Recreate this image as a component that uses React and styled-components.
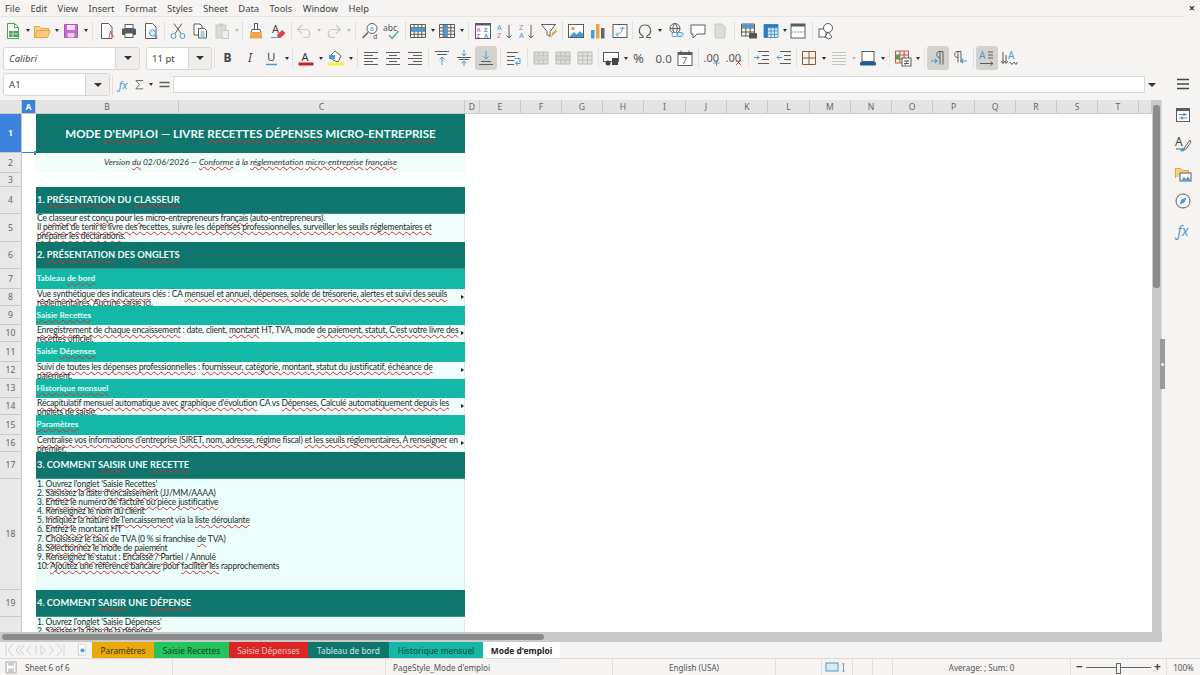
import React from 'react';
import styled, { createGlobalStyle } from 'styled-components';

const Global = createGlobalStyle`
  html, body { margin: 0; padding: 0; background: #f5f4f2; overflow: hidden; }
  * { box-sizing: border-box; }
`;

const Window = styled.div`
  width: 1200px;
  height: 675px;
  display: flex;
  flex-direction: column;
  background: #f5f4f2;
  font-family: "Noto Sans", sans-serif;
  color: #3c3c3c;
  overflow: hidden;
`;

const MenuBar = styled.div`
  height: 17px;
  display: flex;
  align-items: center;
  padding: 0 5px;
  gap: 10.4px;
  font-size: 9.4px;
  color: #444;
  border-bottom: 1px solid #e6e5e3;
  margin-right: 15px;
  position: relative;
`;

const CloseButton = styled.span`
  position: absolute;
  right: -10px;
  top: 1px;
  font-size: 11px;
  font-weight: 700;
  color: #333;
  line-height: 14px;
`;

const Toolbar = styled.div`
  height: ${p => p.$h || 28}px;
  display: flex;
  align-items: center;
  padding-left: ${p => p.$pad || 2}px;
`;

const ToolButton = styled.div`
  width: ${p => p.$w || 22}px;
  height: 24px;
  flex: none;
  display: flex;
  align-items: center;
  justify-content: center;
  border-radius: 3px;
  background: ${p => (p.$active ? '#d4d2cf' : 'transparent')};
`;

const Drop = styled.div`
  width: ${p => p.$w}px;
  flex: none;
  display: flex;
  justify-content: center;
  &::after {
    content: '';
    border-left: 2.5px solid transparent;
    border-right: 2.5px solid transparent;
    border-top: 3px solid ${p => (p.$off ? '#bbb' : '#333')};
  }
`;

const Separator = styled.div`
  width: ${p => p.$w}px;
  height: 20px;
  flex: none;
  display: flex;
  justify-content: center;
  &::after {
    content: '';
    width: 1px;
    background: ${p => (p.$w > 2 ? '#e2e1de' : 'transparent')};
  }
`;

const Combo = styled.div`
  width: ${p => p.$w}px;
  height: 23px;
  margin-left: ${p => p.$ml || 0}px;
  flex: none;
  display: flex;
  background: #fff;
  border: 1px solid #d8d7d4;
  border-radius: 3px;
  font-size: 9.6px;
  font-style: ${p => (p.$italic ? 'italic' : 'normal')};
  color: #444;
`;

const ComboText = styled.div`
  flex: 1;
  display: flex;
  align-items: center;
  padding-left: 5px;
`;

const ComboArrow = styled.div`
  width: ${p => p.$w}px;
  display: flex;
  align-items: center;
  justify-content: center;
  background: #efeeec;
  border-left: 1px solid #d8d7d4;
  &::after {
    content: '';
    border-left: 4px solid transparent;
    border-right: 4px solid transparent;
    border-top: 4px solid #333;
  }
`;

const Body = styled.div`
  height: 586px;
  display: flex;
`;

const Main = styled.div`
  width: 1162px;
  display: flex;
  flex-direction: column;
`;

const FormulaBar = styled.div`
  height: 28px;
  display: flex;
  align-items: center;
  padding: 0 3px 3px;
`;

const FormulaIcons = styled.div`
  display: flex;
  align-items: center;
`;

const FormulaInput = styled.div`
  flex: 1;
  height: 17px;
  margin-left: 1px;
  background: #fff;
  border: 1px solid #d9d8d5;
`;

const ExpandArrow = styled.div`
  width: 14px;
  display: flex;
  justify-content: center;
  &::after {
    content: '';
    border-left: 4px solid transparent;
    border-right: 4px solid transparent;
    border-top: 4px solid #333;
  }
`;

const SheetArea = styled.div`
  height: 532px;
  display: flex;
`;

const Grid = styled.div`
  width: 1152px;
  overflow: hidden;
  background: #fff;
  position: relative;
`;

const HeaderRow = styled.div`
  height: 14px;
  display: flex;
  background: #e4e4e4;
  border-bottom: 1px solid #c9c9c9;
`;

const ColHeader = styled.div`
  width: ${p => p.$w}px;
  flex: none;
  display: flex;
  align-items: center;
  justify-content: center;
  font-size: 8.6px;
  color: ${p => (p.$sel ? '#fff' : '#666')};
  font-weight: ${p => (p.$sel ? 700 : 400)};
  background: ${p => (p.$sel ? '#3b82dc' : 'transparent')};
  border-right: 1px solid #c9c9c9;
`;

const Row = styled.div`
  height: ${p => p.$h}px;
  display: flex;
`;

const RowHeader = styled.div`
  width: 22px;
  flex: none;
  display: flex;
  align-items: center;
  justify-content: center;
  font-size: 8.6px;
  color: ${p => (p.$sel ? '#fff' : '#666')};
  font-weight: ${p => (p.$sel ? 700 : 400)};
  background: ${p => (p.$sel ? '#3b82dc' : '#e8e8e8')};
  border-right: 1px solid #c9c9c9;
  border-bottom: 1px solid #c9c9c9;
`;

const CellA = styled.div`
  width: 14px;
  flex: none;
  position: relative;
  border-bottom: ${p => (p.$sel ? '1.5px solid #3b82dc' : 'none')};
  &::after {
    content: ${p => (p.$sel ? "''" : 'none')};
    position: absolute;
    right: -2px;
    bottom: -2.5px;
    width: 4px;
    height: 4px;
    background: #3b82dc;
  }
`;

const Cell = styled.div`
  width: 429px;
  flex: none;
  overflow: hidden;
  position: relative;
  font-family: Lato, "Liberation Sans", sans-serif;
  white-space: pre;
`;

const TitleCell = styled(Cell)`
  background: #0f766e;
  color: #f0fdfa;
  font-weight: 700;
  font-size: 11.55px;
  display: flex;
  align-items: center;
  justify-content: center;
`;

const VersionCell = styled(Cell)`
  background: #f0fdfa;
  color: #333;
  font-style: italic;
  font-size: 8.5px;
  display: flex;
  align-items: center;
  justify-content: center;
  padding-bottom: 2px;
`;

const SectionCell = styled(Cell)`
  background: #0f766e;
  color: #f0fdfa;
  font-weight: 700;
  font-size: 9.3px;
  display: flex;
  align-items: center;
  padding: 0 0 2px 1px;
  border-bottom: 1px solid #3f918a;
`;

const TabCell = styled(Cell)`
  background: #14b8a6;
  color: #e6fbf7;
  font-weight: 700;
  font-size: 8.3px;
  display: flex;
  align-items: center;
  padding: 0 0 2px 0.5px;
`;

const TextCell = styled(Cell)`
  background: ${p => (p.$tall ? '#eafffb' : '#f0fdfa')};
  color: #2a2a2a;
  font-size: 8.55px;
  letter-spacing: -0.2px;
  line-height: 9.1px;
  padding: ${p => p.$top}px 0 0 1px;
  border-right: 1px solid #e0ecea;
`;

const MoreMark = styled.span`
  position: absolute;
  right: 0;
  top: 6px;
  border-top: 2.5px solid transparent;
  border-bottom: 2.5px solid transparent;
  border-left: 3px solid #222;
`;

const Spell = styled.span`
  text-decoration: underline wavy #d62c2c 1px;
  text-underline-offset: 0.5px;
  text-decoration-skip-ink: none;
`;

const VScroll = styled.div`
  width: 10px;
  padding: 5px 1px 0 0;
  background: #c9c9c9;
  border-right: 1px solid #dcdbd9;
`;

const VThumb = styled.div`
  height: 183px;
  margin-left: 1px;
  width: 7px;
  border-radius: 3px;
  background: #8b8b8b;
`;

const HScroll = styled.div`
  height: 10px;
  padding: 2px 0 0 2px;
  background: #c9c9c9;
`;

const HThumb = styled.div`
  width: 542px;
  height: 6px;
  border-radius: 3px;
  background: #8b8b8b;
`;

const TabBar = styled.div`
  height: 16px;
  display: flex;
  align-items: flex-start;
`;

const NavArrows = styled.div`
  width: 72px;
  height: 16px;
  padding-left: 5px;
  display: flex;
  align-items: center;
  flex: none;
`;

const AddSheet = styled.div`
  width: 20px;
  height: 16px;
  flex: none;
  display: flex;
  align-items: center;
  justify-content: center;
`;

const SheetTab = styled.div`
  width: ${p => p.$w}px;
  height: 16px;
  flex: none;
  display: flex;
  align-items: center;
  justify-content: center;
  font-size: ${p => (p.$current ? 8.4 : 8.3)}px;
  background: ${p => p.$bg};
  color: ${p => p.$fg};
  font-weight: ${p => (p.$current ? 700 : 400)};
`;

const Sidebar = styled.div`
  width: 38px;
  position: relative;
  display: flex;
  flex-direction: column;
  align-items: center;
  padding-left: 3px;
`;

const SideButton = styled.div`
  height: ${p => p.$h}px;
  margin-bottom: ${p => p.$mb || 0}px;
  display: flex;
  align-items: center;
  justify-content: center;
`;

const Splitter = styled.div`
  position: absolute;
  left: -2px;
  top: 267px;
  width: 5px;
  height: 50px;
  background: #9b9b9b;
  display: flex;
  align-items: center;
  justify-content: center;
  &::after {
    content: '';
    width: 3px;
    height: 3px;
    border-radius: 50%;
    background: #f5f4f2;
  }
`;

const StatusBar = styled.div`
  height: 17px;
  display: flex;
  align-items: center;
  border-top: 1px solid #dcdbd9;
  font-size: 8.1px;
  color: #555;
`;

const StatusCell = styled.div`
  width: ${p => p.$w}px;
  height: 100%;
  flex: none;
  display: flex;
  align-items: center;
  justify-content: ${p => p.$justify || 'flex-start'};
  padding-left: ${p => p.$pad || 0}px;
  border-right: ${p => (p.$plain ? 'none' : '1px solid #e0dfdc')};
  gap: ${p => p.$gap || 0}px;
`;

const SliderLine = styled.div`
  width: 65px;
  height: 1px;
  background: #666;
  position: relative;
  margin: 0 3px;
  &::after {
    content: '';
    position: absolute;
    left: 30px;
    top: -4px;
    width: 3px;
    height: 9px;
    background: #f5f4f2;
    border: 1px solid #666;
  }
`;

const ZoomSign = styled.span`
  font-size: 12px;
  font-weight: 700;
  color: #444;
  line-height: 12px;
`;

const BLUE = '#4a9ad6';
const DARK = '#5c5c5c';
const GREY = '#c8c8c6';
const ORANGE = '#eba13c';
const RED = '#d9453f';
const PURPLE = '#c06fc6';
const GREEN = '#46a35c';

const Lines = ({ rows, color = DARK }) => (
  <path d={rows.map(([y, a, b]) => `M${a} ${y}H${b}`).join('')} stroke={color} fill="none" />
);

const Cells = ({ x, y, w, h, nx, ny, color = DARK, fill = 'none' }) => {
  let d = `M${x} ${y}h${w}v${h}h${-w}z`;
  for (let i = 1; i < nx; i++) d += `M${x + (w * i) / nx} ${y}v${h}`;
  for (let i = 1; i < ny; i++) d += `M${x} ${y + (h * i) / ny}h${w}`;
  return <path d={d} stroke={color} fill={fill} />;
};

const Label = ({ x, y, size = 8, color = DARK, weight = 400, style, children }) => (
  <text x={x} y={y} fontSize={size} fill={color} fontWeight={weight} fontStyle={style} fontFamily="Noto Sans, sans-serif">{children}</text>
);

const ArrowDown = ({ x, y1, y2, color = BLUE }) => (
  <path d={`M${x} ${y1}V${y2}M${x - 2.5} ${y2 - 2.5}L${x} ${y2}L${x + 2.5} ${y2 - 2.5}`} stroke={color} fill="none" />
);

const ArrowUp = ({ x, y1, y2, color = BLUE }) => (
  <path d={`M${x} ${y1}V${y2}M${x - 2.5} ${y2 + 2.5}L${x} ${y2}L${x + 2.5} ${y2 + 2.5}`} stroke={color} fill="none" />
);

const icons = {
  new: <><path d="M3.5 1.5h7l4 4v11h-11z" fill="#fff" stroke={GREEN} /><path d="M10.5 1.5v4h4" fill="none" stroke={GREEN} /><rect x="5" y="9" width="9" height="6" fill={GREEN} /><path d="M5 12h9M9 9v6" stroke="#bfe3c6" /></>,
  open: <><path d="M1.5 15V4.5h5l2 2h7V9" fill="#f6d08f" stroke={ORANGE} /><path d="M1.5 15.5l2.5-7h13l-2.5 7z" fill="#f9c97c" stroke={ORANGE} /></>,
  save: <><path d="M2.5 2.5h13v13h-13z" fill={PURPLE} stroke="#a85bb0" /><rect x="5" y="3" width="8" height="5" fill="#f3dff5" /><rect x="5.5" y="11" width="7" height="4.5" fill="#e9cdec" /></>,
  pdf: <><path d="M3.5 1.5h7l3.5 3.5v11.5h-10.5z" fill="#fff" stroke={DARK} /><path d="M10.5 17c1-3 1.5-6 2-8 .5 3 2 5 4 6" fill="none" stroke={RED} /></>,
  print: <><rect x="5" y="2.5" width="8" height="4" fill="#fff" stroke={DARK} /><rect x="2" y="6.5" width="14" height="6.5" rx="1" fill="#4d5a66" /><rect x="5" y="11" width="8" height="4.5" fill="#fff" stroke={DARK} /></>,
  preview: <><path d="M3.5 1.5h7l3.5 3.5v11.5h-10.5z" fill="#fff" stroke={DARK} /><circle cx="10.5" cy="11" r="3" fill="#e3f1fa" stroke={BLUE} /><path d="M12.5 13.5l3 3" stroke={BLUE} strokeWidth="1.5" /></>,
  cut: <><path d="M5 1.5l7 10M13 1.5l-7 10" stroke={DARK} fill="none" /><circle cx="4.5" cy="14" r="2.5" fill="none" stroke={BLUE} /><circle cx="13.5" cy="14" r="2.5" fill="none" stroke={BLUE} /></>,
  copy: <><path d="M3 2h6l2 2v9H3z" fill="#fff" stroke={DARK} /><path d="M7.5 6.5h6l2 2v7.5h-8z" fill="#fff" stroke={DARK} /><path d="M9.5 10h4M9.5 12h4M9.5 14h4" stroke={BLUE} /></>,
  paste: <><rect x="3" y="3" width="10" height="13" fill="#dcdcda" stroke={GREY} /><rect x="6" y="1.5" width="4" height="3" fill={GREY} /><rect x="9" y="8.5" width="6.5" height="8" fill="#eee" stroke={GREY} /></>,
  clone: <><rect x="7.5" y="1.5" width="3" height="6" fill="#fff" stroke={DARK} /><path d="M5 7.5h8l1 3H4z" fill="#fff" stroke={DARK} /><path d="M4 10.5h10l1 5.5H3z" fill="#f2a650" stroke={ORANGE} /></>,
  clear: <><Label x={3} y={11} size={11} color="#444">A</Label><path d="M8 13l5-5 3.5 3-5 5h-2z" fill={RED} /><path d="M2 15.5h7" stroke={BLUE} /></>,
  undo: <path d="M7 3L2.5 7.5 7 11.5M3 7.5h8c5 0 5 8 0 8H8" fill="none" stroke={GREY} strokeWidth="1.2" />,
  redo: <path d="M11 3l4.5 4.5L11 11.5M15 7.5H7c-5 0-5 8 0 8h3" fill="none" stroke={GREY} strokeWidth="1.2" />,
  find: <><circle cx="11" cy="6.5" r="5" fill="#fff" stroke={DARK} /><path d="M7 10.5l-5.5 5.5" stroke={DARK} strokeWidth="1.5" /><Label x={8.5} y={9} size={7.5} color={BLUE}>a</Label><Label x={12} y={16.5} size={7}>d</Label></>,
  spell: <><Label x={0} y={8.5} size={8.5} color="#555">abc</Label><path d="M6 13l3 3.5L15.5 9" fill="none" stroke="#4db07a" strokeWidth="1.3" /></>,
  tableRow: <><Cells x={1.5} y={2.5} w={15} h={13} nx={4} ny={4} /><rect x="2" y="6" width="14" height="3.5" fill={BLUE} /></>,
  tableCol: <><Cells x={1.5} y={2.5} w={15} h={13} nx={4} ny={4} /><rect x="6" y="3" width="3.5" height="12" fill={BLUE} /></>,
  sort: <><rect x="1.5" y="1.5" width="15" height="15" fill="#fff" stroke={DARK} /><rect x="1.5" y="1.5" width="15" height="2" fill={DARK} /><Label x={2.5} y={9.5} size={6} color={PURPLE} weight={700}>A</Label><Label x={2.5} y={15.5} size={6} color={PURPLE} weight={700}>Z</Label><Label x={10} y={9.5} size={6} color={BLUE} weight={700}>Z</Label><Label x={10} y={15.5} size={6} color={BLUE} weight={700}>A</Label></>,
  asc: <><Label x={1} y={8} size={7.5} color={BLUE}>A</Label><Label x={1} y={16} size={7.5} color={PURPLE}>Z</Label><ArrowDown x={13} y1={3} y2={16} color={DARK} /></>,
  desc: <><Label x={1} y={8} size={7.5} color={PURPLE}>Z</Label><Label x={1} y={16} size={7.5} color={BLUE}>A</Label><ArrowDown x={13} y1={3} y2={16} color={DARK} /></>,
  filter: <><path d="M1.5 2.5h14l-5.5 7v5l-3-2v-3z" fill="#fff" stroke={DARK} /><path d="M11 16l1-5 4-3.5 1 2-4 3.5z" fill={ORANGE} /></>,
  image: <><rect x="1.5" y="2.5" width="15" height="13" fill="#fff" stroke={DARK} /><circle cx="6" cy="6.5" r="1.8" fill={ORANGE} /><path d="M2 15l5-5 3 2.5 3-3.5 3 3v3z" fill={BLUE} /></>,
  chart: <><rect x="2" y="8" width="3.5" height="8.5" fill={BLUE} /><rect x="7" y="2" width="3.5" height="14.5" fill={ORANGE} /><rect x="12" y="6" width="3.5" height="10.5" fill="#666" /></>,
  pivot: <><rect x="2" y="2.5" width="14" height="13" fill="#fafafa" stroke={DARK} /><path d="M5.5 12.5c3 0 6-3 6-7M9.5 7l2-2 2 2M7 10.5l-2 2 2 2" fill="none" stroke={BLUE} /></>,
  omega: <path d="M3 15.5h4v-1.5c-6-3-4-11 2-11s8 8 2 11v1.5h4" fill="none" stroke={DARK} strokeWidth="1.2" />,
  link: <><circle cx="8" cy="6.5" r="5" fill="none" stroke={DARK} /><path d="M3 6.5h10M8 1.5c-3 3-3 7 0 10M8 1.5c3 3 3 7 0 10" fill="none" stroke={DARK} /><rect x="5" y="10.5" width="6" height="4" rx="2" fill="#fff" stroke={BLUE} /><rect x="10" y="10.5" width="6" height="4" rx="2" fill="none" stroke={BLUE} /></>,
  comment: <path d="M2 3h14v9H8l-4 4v-4H2z" fill="#fff" stroke={DARK} />,
  headers: <path d="M4 2h7l3 3v11H4z" fill="#dcdcda" stroke={GREY} />,
  printArea: <><Cells x={1.5} y={2} w={13} h={12} nx={3} ny={3} /><rect x="2" y="2.5" width="12" height="3" fill={BLUE} /><rect x="9" y="11" width="8" height="5.5" rx="1" fill="#555" /></>,
  freeze: <><Cells x={2} y={2.5} w={14} h={13} nx={4} ny={4} color={BLUE} fill="#dcebf7" /><rect x="2" y="2.5" width="14" height="3" fill="#2e7cbc" /><rect x="2" y="2.5" width="3.5" height="13" fill="#2e7cbc" /></>,
  split: <><rect x="2" y="2" width="14" height="14" fill="#fff" stroke={DARK} /><rect x="2" y="2" width="14" height="2.5" fill={DARK} /><path d="M2 10h14" stroke={BLUE} strokeDasharray="2 1" /></>,
  shapes: <><rect x="2" y="7" width="7" height="8" fill="#fff" stroke={DARK} /><circle cx="11" cy="6" r="4.5" fill="#fff" stroke={DARK} /><path d="M8 15l3-5 4 5-3 2z" fill="#fff" stroke={DARK} /></>,
  bold: <Label x={4.5} y={13} size={12} weight={700} color="#444">B</Label>,
  italic: <Label x={7} y={13} size={12} style="italic" color="#444">I</Label>,
  underline: <><Label x={4} y={12} size={11.5} color="#444">U</Label><path d="M3 15.5h11" stroke={BLUE} strokeWidth="1.5" /></>,
  fontColor: <><Label x={4.5} y={12} size={11} color="#333">A</Label><rect x="1.5" y="13.5" width="15" height="3" fill="#c9211e" /></>,
  bgColor: <><path d="M8 2l6 5-3 6-5-2-2-5z" fill="#fff" stroke={DARK} /><rect x="2" y="6" width="6" height="4" fill={BLUE} /><rect x="1.5" y="13.5" width="15" height="3" fill="#f7f034" /></>,
  left: <Lines rows={[[3.5, 2, 16], [6.5, 2, 11], [9.5, 2, 16], [12.5, 2, 11], [15.5, 2, 16]]} />,
  center: <Lines rows={[[3.5, 2, 16], [6.5, 5, 13], [9.5, 2, 16], [12.5, 5, 13], [15.5, 2, 16]]} />,
  right: <Lines rows={[[3.5, 2, 16], [6.5, 7, 16], [9.5, 2, 16], [12.5, 7, 16], [15.5, 2, 16]]} />,
  top: <><Lines rows={[[2.5, 2, 16], [5.5, 4, 14]]} /><ArrowUp x={9} y1={16} y2={8} /></>,
  middle: <><Lines rows={[[8.5, 2, 16], [10.5, 4, 14]]} /><ArrowDown x={9} y1={1} y2={7} /><ArrowUp x={9} y1={17} y2={12} /></>,
  bottom: <><Lines rows={[[12.5, 4, 14], [15.5, 2, 16]]} /><ArrowDown x={9} y1={2} y2={10} /></>,
  wrap: <><Lines rows={[[3.5, 2, 13], [7.5, 2, 10], [11.5, 2, 9], [15.5, 2, 9]]} /><path d="M10 9.5h5v5h-4M13 12.5l-2.5 2 2.5 2" fill="none" stroke={BLUE} /></>,
  merge: <><Cells x={2} y={3} w={14} h={12} nx={3} ny={3} color="#bcbcba" fill="#dcdcda" /><rect x="2.5" y="7" width="13" height="4" fill="#d2d2d0" /></>,
  mergeCenter: <><Cells x={2} y={3} w={14} h={12} nx={3} ny={1} color="#bcbcba" fill="#dcdcda" /><rect x="2" y="7" width="14" height="4" fill="#d2d2d0" stroke="#bcbcba" /></>,
  unmerge: <Cells x={2} y={3} w={14} h={12} nx={3} ny={3} color="#bcbcba" fill="#e2e2e0" />,
  currency: <><rect x="1.5" y="3.5" width="15" height="9" fill="#fff" stroke={DARK} /><circle cx="6" cy="14" r="2.5" fill="#444" /><rect x="10" y="9" width="6" height="7" fill="#444" /></>,
  percent: <Label x={1} y={14} size={13} color="#555">%</Label>,
  number: <Label x={1.5} y={13.5} size={11.5} color="#555">0.0</Label>,
  date: <><rect x="2" y="3.5" width="14" height="13" fill="#fff" stroke={DARK} /><rect x="2" y="3.5" width="14" height="2.5" fill={DARK} /><path d="M5 1.5v3M13 1.5v3" stroke={DARK} /><Label x={6} y={14.5} size={9}>7</Label></>,
  addDec: <><Label x={0.5} y={12.5} size={11} color="#555">.00</Label><path d="M13.5 11v6M10.5 14h6" stroke={BLUE} /></>,
  delDec: <><Label x={0.5} y={12.5} size={11} color="#555">.00</Label><path d="M11 11l5 5M16 11l-5 5" stroke={RED} /></>,
  indent: <><Lines rows={[[2.5, 5, 16], [6.5, 9, 16], [10.5, 9, 16], [14.5, 5, 16]]} /><path d="M1 8.5h5M4 6.5l2 2-2 2" fill="none" stroke={BLUE} /></>,
  outdent: <><Lines rows={[[2.5, 5, 16], [6.5, 9, 16], [10.5, 9, 16], [14.5, 5, 16]]} /><path d="M7 8.5H2M4 6.5l-2 2 2 2" fill="none" stroke={BLUE} /></>,
  border: <path d="M2.5 2.5h13v13h-13zM9 2.5v13M2.5 9h13" fill="none" stroke="#8a5a2c" />,
  borderStyle: <Lines color="#c4c4c2" rows={[[3.5, 2, 16], [6.5, 2, 16], [9.5, 2, 16], [12.5, 2, 16], [15.5, 2, 16]]} />,
  borderColor: <><rect x="3" y="2.5" width="12" height="10" fill="#fff" stroke={DARK} /><rect x="1" y="13" width="16" height="3.5" rx="1" fill="#1f5f9e" /></>,
  conditional: <><Cells x={1.5} y={2} w={13} h={12} nx={3} ny={3} color="#c2574f" fill="#f5e7e3" /><rect x="2" y="6" width="4" height="4" fill={GREEN} /><rect x="8" y="9" width="9" height="8" fill="#fff" stroke={DARK} /><path d="M10 12h5M10 14.5h5M11 16l3-5" stroke={DARK} /></>,
  ltr: <><path d="M14 2.5H10c-3 0-3 6 0 6h1M11 2.5v13M14 2.5v13" fill="none" stroke={DARK} /><path d="M2 12h6M6 10l2 2-2 2" fill="none" stroke={BLUE} strokeWidth="1.2" /></>,
  rtl: <><path d="M10 2.5H6c-3 0-3 6 0 6h1M7 2.5v11M10 2.5v11" fill="none" stroke={DARK} /><path d="M16 12h-6M12 10l-2 2 2 2" fill="none" stroke={BLUE} strokeWidth="1.2" /></>,
  textH: <><Label x={1} y={10} size={10} color={BLUE}>A</Label><path d="M10 3h5M10 6h5M10 9h5" stroke={DARK} /><path d="M2 14.5h13M12.5 12.5l2.5 2-2.5 2" fill="none" stroke={DARK} /></>,
  textV: <><Label x={8} y={10} size={10} color={BLUE}>A</Label><path d="M3 3v11M6 6v8" stroke={DARK} /><path d="M1 12l2 2.5L5 12M4 12l2 2.5L8 12M10 13l2 2.5 2-2.5M14 13l2 2.5L17.5 13" fill="none" stroke={DARK} /></>,
  fx: <Label x={2} y={13} size={12} color={BLUE} style="italic">ƒx</Label>,
  sum: <path d="M14 3.5H4l5 5.5-5 6h10" fill="none" stroke={DARK} strokeWidth="1.2" />,
  equals: <path d="M3 6.5h12M3 11.5h12" stroke={DARK} strokeWidth="1.8" />,
  menu: <path d="M3 4.5h12M3 9h12M3 13.5h12" stroke="#444" strokeWidth="1.6" />,
  properties: <><rect x="2.5" y="2.5" width="13" height="13" fill="#fff" stroke={DARK} /><rect x="2.5" y="2.5" width="13" height="2.5" fill={DARK} /><path d="M5 8.5h8M5 12h8" stroke={BLUE} /><path d="M10 7v3M8 10.5v3" stroke={DARK} /></>,
  styles: <><Label x={1} y={11} size={12} color="#444">A</Label><path d="M2 14h8" stroke={DARK} /><path d="M16 5l-5 7-2 3 3-1 5-7z" fill="#fff" stroke={DARK} /><path d="M6 16c1-3 4-4 5-2s-3 3-5 2z" fill={BLUE} /></>,
  gallery: <><path d="M1.5 13V3.5h5l2 2h6v3" fill="#f6d08f" stroke={ORANGE} /><rect x="6" y="8" width="11" height="8" fill="#fff" stroke={DARK} /><path d="M7 15.5l3-3.5 2 2 2-2.5 2.5 4z" fill={BLUE} /></>,
  navigator: <><circle cx="9" cy="9" r="7" fill="#fff" stroke={DARK} /><path d="M12.5 5.5L10.5 10.5 5.5 12.5 7.5 7.5z" fill={BLUE} /></>,
  functions: <Label x={2} y={14} size={14} color={BLUE} style="italic">ƒx</Label>,
  save2: <><rect x="2.5" y="2.5" width="12" height="13" fill="#fff" stroke="#999" /><rect x="5" y="3" width="7" height="4" fill="#ccc" /><rect x="5" y="10" width="7" height="5.5" fill="#ccc" /></>,
  selection: <rect x="3" y="5" width="12" height="8" fill="#d8ebf7" stroke={BLUE} />,
  ibeam: <path d="M2 3h4M4 3v12M2 15h4" stroke={DARK} fill="none" />,
  addSheet: <><path d="M4 1.5h7l2 2v11H4z" fill="#fff" stroke="#ccc" /><circle cx="9" cy="9" r="2.5" fill={BLUE} /></>,
  nav: <path d="M1 2v12M8 2L3 8l5 6M15 3l-4 5 4 5M19 3l-4 5 4 5M26 3l-4 5 4 5M31 3v10M36 3v10M36 3l4 5-4 5M44 3l4 5-4 5M52 2l5 6-5 6M59 2v12" fill="none" stroke="#d2d2d0" />,
};

const Icon = ({ name, size = 18 }) => (
  <svg width={size} height={size} viewBox="0 0 18 18">{icons[name]}</svg>
);

const MENUS = ['File', 'Edit', 'View', 'Insert', 'Format', 'Styles', 'Sheet', 'Data', 'Tools', 'Window', 'Help'];

const TOOLS_TOP = [
  'new', 'd', 'open', 'd', 'save', 'd', 7, 'pdf', 'print', 'preview', 5, 'cut', 'copy', 'paste', 'o', 5, 'clone', 'clear', 4,
  'undo', 'o', 1, 'redo', 'o', 7, 'find', 'spell', 4, 'tableRow', 'd', 'tableCol', 'd', 7, 'sort', 'asc', 'desc', 'filter', 5,
  'image', 'chart', 'pivot', 3, 'omega', 'd', 2, 'link', 'comment', 'headers', 7, 'printArea', 'freeze', 'n', 'split', 6, 'shapes',
];

const TOOLS_FORMAT = [
  5, 'bold', 'italic', 'underline', 'd', 5, 'fontColor', 'd', 1, 'bgColor', 'd', 6, 'left', 'center', 'right', 5,
  'top', 'middle', '*bottom', 6, 'wrap', 5, 'merge', 'mergeCenter', 'unmerge', 4, 'currency', 'd', 1, 'percent', 'number', 'date', 5,
  'addDec', 'delDec', 6, 'indent', 'outdent', 3, 'border', 'd', 1, 'borderStyle', 'o', 'borderColor', 'd', 6, 'conditional', 'd', 6,
  '*ltr', 'rtl', 5, '*textH', 'textV',
];

const renderTools = items => items.map((item, i) => {
  if (typeof item === 'number') return <Separator key={i} $w={item} />;
  if (item === 'd') return <Drop key={i} $w={7} />;
  if (item === 'n') return <Drop key={i} $w={5} />;
  if (item === 'o') return <Drop key={i} $w={7} $off />;
  const active = item[0] === '*';
  return (
    <ToolButton key={i} $active={active}>
      <Icon name={active ? item.slice(1) : item} />
    </ToolButton>
  );
});

const COLUMNS = [
  ['A', 14, true], ['B', 143], ['C', 286], ['D', 15], ['E', 41], ['F', 41], ['G', 41], ['H', 41], ['I', 42], ['J', 41], ['K', 41],
  ['L', 42], ['M', 41], ['N', 41], ['O', 41], ['P', 42], ['Q', 41], ['R', 41], ['S', 41], ['T', 41], ['', 13],
];

// [...] marks the words the spell checker underlined
const spell = text => text.split(/(\[[^\]]*\])/).map((part, i) => (
  part[0] === '[' ? <Spell key={i}>{part.slice(1, -1)}</Spell> : part
));

const ROWS = [
  { n: 1, h: 39, kind: TitleCell, text: "MODE [D'EMPLOI] — LIVRE [RECETTES] [DÉPENSES] [MICRO-ENTREPRISE]", sel: true },
  { n: 2, h: 20, kind: VersionCell, text: 'Version [du] 02/06/2026 — [Conforme] à la [réglementation] [micro-entreprise] [française]' },
  { n: 3, h: 14 },
  { n: 4, h: 27, kind: SectionCell, text: '1. [PRÉSENTATION] DU [CLASSEUR]' },
  { n: 5, h: 28, kind: TextCell, top: 0, text: 'Ce [classeur] est [conçu] pour [les] micro-entrepreneurs [français] (auto-entrepreneurs).\n[Il permet de tenir le livre des recettes, suivre les dépenses professionnelles, surveiller les seuils réglementaires et]\n[préparer les déclarations.]' },
  { n: 6, h: 27, kind: SectionCell, text: '2. [PRÉSENTATION] DES [ONGLETS]' },
  { n: 7, h: 20, kind: TabCell, text: 'Tableau [de bord]' },
  { n: 8, h: 17, kind: TextCell, top: 1, more: true, text: '[Vue synthétique des indicateurs] clés : CA [mensuel et annuel, dépenses, solde de trésorerie, alertes et suivi des seuils]\n[réglementaires]. Aucune saisie [ici].' },
  { n: 9, h: 19, kind: TabCell, text: '[Saisie Recettes]' },
  { n: 10, h: 17, kind: TextCell, top: 1, more: true, text: "[Enregistrement de chaque encaissement] : date, client, [montant] HT, TVA, mode [de paiement, statut, C'est votre livre des]\n[recettes officiel.]" },
  { n: 11, h: 20, kind: TabCell, text: 'Saisie [Dépenses]' },
  { n: 12, h: 17, kind: TextCell, top: 1, more: true, text: '[Suivi de toutes les dépenses professionnelles] : [fournisseur, catégorie, montant, statut du justificatif, échéance de]\n[paiement.]' },
  { n: 13, h: 19, kind: TabCell, text: '[Historique mensuel]' },
  { n: 14, h: 17, kind: TextCell, top: 1, more: true, text: "[Récapitulatif mensuel automatique avec graphique d'évolution] CA vs [Dépenses, Calculé automatiquement depuis les]\n[onglets de saisie.]" },
  { n: 15, h: 20, kind: TabCell, text: '[Paramètres]' },
  { n: 16, h: 17, kind: TextCell, top: 1, more: true, text: "[Centralise vos informations d'entreprise (SIRET, nom, adresse, régime] fiscal) [et les seuils réglementaires, À renseigner] en\n[premier.]" },
  { n: 17, h: 27, kind: SectionCell, text: '3. COMMENT [SAISIR] UNE [RECETTE]' },
  { n: 18, h: 111, kind: TextCell, tall: true, top: 1, text: "1. [Ouvrez] [l'onglet] ['Saisie Recettes']\n2. [Saisissez] la date [d'encaissement] (JJ/MM/AAAA)\n3. [Entrez le numéro de facture ou pièce justificative]\n4. [Renseignez le nom du] client\n5. [Indiquez] la nature [de l'encaissement] via la [liste déroulante]\n6. [Entrez le montant] HT\n7. [Choisissez le taux de] TVA (0 % [si] franchise [de] TVA)\n8. [Sélectionnez le] mode [de paiement]\n9. [Renseignez le statut] : [Encaissé] / [Partiel] / [Annulé]\n10. [Ajoutez une référence bancaire] pour [faciliter les] rapprochements" },
  { n: 19, h: 27, kind: SectionCell, text: '4. COMMENT [SAISIR] UNE [DÉPENSE]' },
  { n: 20, h: 60, kind: TextCell, tall: true, top: 1, text: "1. [Ouvrez] [l'onglet] ['Saisie Dépenses']\n2. [Saisissez la date de la dépense]" },
];

const TABS = [
  ['Paramètres', 62, '#eaaa08', '#3a3000'],
  ['Saisie Recettes', 75, '#22c55e', '#0e3b1e'],
  ['Saisie Dépenses', 79, '#dc2626', '#f6c9c9'],
  ['Tableau de bord', 81, '#0f766e', '#cfe9e5'],
  ['Historique mensuel', 94, '#14b8a6', '#0c3f3a'],
];

const SIDE_ICONS = [['menu', 24, 3], ['properties', 32], ['styles', 26], ['gallery', 34], ['navigator', 20], ['functions', 40]];

export default function App() {
  return (
    <Window>
      <Global />
      <MenuBar>
        {MENUS.map(m => <span key={m}>{m}</span>)}
        <CloseButton>×</CloseButton>
      </MenuBar>
      <Toolbar $h={27}>{renderTools(TOOLS_TOP)}</Toolbar>
      <Toolbar $pad={3}>
        <Combo $w={137} $italic>
          <ComboText>Calibri</ComboText>
          <ComboArrow $w={24} />
        </Combo>
        <Combo $w={66} $ml={6}>
          <ComboText>11 pt</ComboText>
          <ComboArrow $w={23} />
        </Combo>
        {renderTools(TOOLS_FORMAT)}
      </Toolbar>
      <Body>
        <Main>
          <FormulaBar>
            <Combo $w={107}>
              <ComboText>A1</ComboText>
              <ComboArrow $w={24} />
            </Combo>
            <FormulaIcons>
              <Separator $w={5} />
              <ToolButton $w={18}><Icon name="fx" size={16} /></ToolButton>
              <Icon name="sum" size={13} />
              <Drop $w={9} />
              <Separator $w={2} />
              <Icon name="equals" size={15} />
            </FormulaIcons>
            <FormulaInput />
            <ExpandArrow />
          </FormulaBar>
          <SheetArea>
            <Grid>
              <HeaderRow>
                <ColHeader $w={22} />
                {COLUMNS.map(([label, w, sel]) => <ColHeader key={label} $w={w} $sel={sel}>{label}</ColHeader>)}
              </HeaderRow>
              {ROWS.map(({ n, h, kind: Kind, text, top, more, sel, tall }) => (
                <Row key={n} $h={h}>
                  <RowHeader $sel={sel}>{n}</RowHeader>
                  <CellA $sel={sel} />
                  {Kind && (
                    <Kind $top={top} $tall={tall}>
                      {Kind === TextCell ? spell(text) : <span>{spell(text)}</span>}
                      {more && <MoreMark />}
                    </Kind>
                  )}
                </Row>
              ))}
            </Grid>
            <VScroll><VThumb /></VScroll>
          </SheetArea>
          <HScroll><HThumb /></HScroll>
          <TabBar>
            <NavArrows><svg width="60" height="16" viewBox="0 0 60 16">{icons.nav}</svg></NavArrows>
            <AddSheet><Icon name="addSheet" size={15} /></AddSheet>
            {TABS.map(([label, w, bg, fg]) => <SheetTab key={label} $w={w} $bg={bg} $fg={fg}>{label}</SheetTab>)}
            <SheetTab $w={77} $bg="#fff" $fg="#222" $current>Mode d'emploi</SheetTab>
          </TabBar>
        </Main>
        <Sidebar>
          <Splitter />
          {SIDE_ICONS.map(([name, h, mb]) => <SideButton key={name} $h={h} $mb={mb}><Icon name={name} /></SideButton>)}
        </Sidebar>
      </Body>
      <StatusBar>
        <StatusCell $w={173} $pad={4} $gap={6}><Icon name="save2" size={15} />Sheet 6 of 6</StatusCell>
        <StatusCell $w={213} />
        <StatusCell $w={227} $pad={7}>PageStyle_Mode d'emploi</StatusCell>
        <StatusCell $w={163} $justify="center">English (USA)</StatusCell>
        <StatusCell $w={46} />
        <StatusCell $w={31} $justify="center"><Icon name="selection" size={18} /><Icon name="ibeam" size={11} /></StatusCell>
        <StatusCell $w={20} />
        <StatusCell $w={20} />
        <StatusCell $w={178} $justify="center">Average: ; Sum: 0</StatusCell>
        <StatusCell $w={96} $justify="center"><ZoomSign>−</ZoomSign><SliderLine /><ZoomSign>+</ZoomSign></StatusCell>
        <StatusCell $w={33} $justify="center" $plain>100%</StatusCell>
      </StatusBar>
    </Window>
  );
}
